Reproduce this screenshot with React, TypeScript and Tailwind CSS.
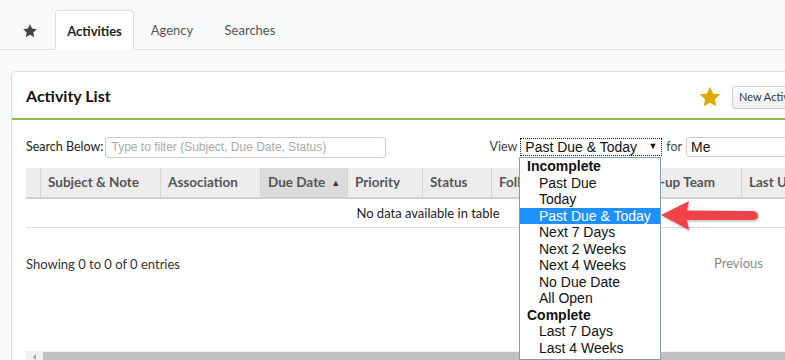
import React from "react";

const sans = { fontFamily: "Lato, 'Open Sans', sans-serif" };
const arial = { fontFamily: "'Liberation Sans', Arial, sans-serif" };

function Star({ className, color }: { className?: string; color: string }) {
  return (
    <svg viewBox="0 0 24 24" className={className}>
      <path
        d="M12 1.8l3.1 6.6 7.1.9-5.2 4.9 1.3 7.1L12 17.8l-6.3 3.5 1.3-7.1-5.2-4.9 7.1-.9z"
        fill={color}
      />
    </svg>
  );
}

const cols = [
  { w: 14, label: "" },
  { w: 120, label: "Subject & Note" },
  { w: 100, label: "Association" },
  { w: 87, label: "Due Date", sorted: true },
  { w: 75, label: "Priority" },
  { w: 69, label: "Status" },
  { w: 121, label: "Follow-up Date" },
  { w: 129, label: "Follow-up Team" },
  { w: 120, label: "Last Updated" },
];

const options: { t: string; group?: boolean; sel?: boolean }[] = [
  { t: "Incomplete", group: true },
  { t: "Past Due" },
  { t: "Today" },
  { t: "Past Due & Today", sel: true },
  { t: "Next 7 Days" },
  { t: "Next 2 Weeks" },
  { t: "Next 4 Weeks" },
  { t: "No Due Date" },
  { t: "All Open" },
  { t: "Complete", group: true },
  { t: "Last 7 Days" },
  { t: "Last 4 Weeks" },
];

export default function App() {
  return (
    <div
      className="relative w-[785px] h-[360px] overflow-hidden bg-[#f8f9fa] text-[#333]"
      style={sans}
    >
      {/* Tabs */}
      <div className="flex items-end h-[50px] border-b border-[#dddddd]">
        <div className="w-[55px] h-[40px] flex items-center justify-center pt-[3px]">
          <Star className="w-[16px] h-[16px] ml-[5px]" color="#444" />
        </div>
        <div className="w-[79px] h-[40px] -mb-px bg-white border border-[#dddddd] border-b-white rounded-t-[4px] flex items-center justify-center pt-[4px] text-[13px] font-bold text-[#222]">
          Activities
        </div>
        <div className="w-[76px] h-[40px] flex items-center justify-center pt-[4px] text-[13px] text-[#555]">
          Agency
        </div>
        <div className="w-[80px] h-[40px] flex items-center justify-center pt-[4px] text-[13px] text-[#555]">
          Searches
        </div>
      </div>

      {/* Panel */}
      <div className="ml-[11px] mt-[21px] w-[820px] bg-white border border-[#dddddd] rounded-tl-[4px]">
        <div className="h-[48px] flex items-center justify-between pl-[14px] pr-[22px] border-b-2 border-[#8cbb4a]">
          <div className="text-[16px] font-bold text-[#111] pt-[2px]">Activity List</div>
          <div className="flex items-center gap-[10px] pt-[4px]">
            <Star className="w-[24px] h-[24px]" color="#e0a800" />
            <div className="h-[23px] w-[76px] px-[6px] border border-[#cccccc] rounded-[3px] bg-gradient-to-b from-white to-[#eeeeee] text-[11px] text-[#333] flex items-center whitespace-nowrap">
              New Activity
            </div>
          </div>
        </div>

        <div className="pl-[14px]">
          {/* Search row */}
          <div className="h-[48px] flex items-center pt-[6px]">
            <span className="text-[12.5px] text-[#222]">Search Below:</span>
            <div
              className="ml-[2px] w-[281px] h-[21px] border border-[#cccccc] rounded-[3px] flex items-center px-[5px] text-[12px] text-[#aaaaaa]"
              style={arial}
            >
              Type to filter (Subject, Due Date, Status)
            </div>
            <span className="ml-[103px] text-[12.5px] text-[#444]">View</span>
            <div
              className="ml-[3px] w-[142px] h-[18px] border border-dotted border-[#222] flex items-center justify-between pl-[4px] pr-[4px] text-[14px] text-[#111]"
              style={arial}
            >
              <span>Past Due &amp; Today</span>
              <span className="text-[9px]">▼</span>
            </div>
            <span className="ml-[4px] text-[12.5px] text-[#444]">for</span>
            <div
              className="ml-[4px] w-[130px] h-[20px] border border-[#cccccc] rounded-[3px] flex items-center px-[4px] text-[14px] text-[#111]"
              style={arial}
            >
              Me
            </div>
          </div>

          {/* Table */}
          <div>
            <div className="flex h-[31px] bg-[#ededed] border-b-2 border-[#cfcfcf]">
              {cols.map((c, i) => (
                <div
                  key={i}
                  className={`shrink-0 flex items-center px-[7px] text-[13.5px] font-bold text-[#555] whitespace-nowrap overflow-hidden ${
                    i > 0 ? "border-l border-[#d4d4d4]" : ""
                  } ${c.sorted ? "bg-[#dcdcdc] text-[#222]" : ""}`}
                  style={{ width: c.w }}
                >
                  {c.label}
                  {c.sorted && <span className="ml-[6px] text-[9px] text-[#333]">▲</span>}
                </div>
              ))}
            </div>
            <div className="h-[29px] flex items-center border-b border-[#dddddd] pt-[1px]">
              <div className="w-[828px] text-center text-[13px] text-[#222]">
                No data available in table
              </div>
            </div>
          </div>

          {/* Footer */}
          <div className="h-[123px] flex items-start pt-[27px]">
            <span className="text-[13px] text-[#333]">Showing 0 to 0 of 0 entries</span>
            <span className="ml-[534px] -mt-[1px] text-[13px] text-[#888]">Previous</span>
          </div>

          {/* Scrollbar */}
          <div className="h-[10px] flex bg-[#f1f1f1] pt-[1px]">
            <div className="w-[17px] flex items-end justify-center">
              <div className="w-0 h-0 border-y-[3px] border-y-transparent border-r-[3px] border-r-[#a3a3a3] mb-[1px]"></div>
            </div>
            <div className="flex-1 bg-[#c1c1c1]"></div>
          </div>
        </div>
      </div>

      {/* Dropdown list */}
      <div
        className="absolute left-[519px] top-[157px] w-[142px] h-[203px] bg-white border border-[#7f9db9] text-[14px] text-[#111]"
        style={arial}
      >
        {options.map((o, i) => (
          <div
            key={i}
            className={`h-[16.55px] leading-[16.55px] whitespace-nowrap ${
              o.group ? "pl-[7px] font-bold" : "pl-[19px]"
            } ${o.sel ? "bg-[#1e90ff] text-white" : ""}`}
          >
            {o.t}
          </div>
        ))}
      </div>

      {/* Red arrow */}
      <svg
        className="absolute left-[656px] top-[198px] w-[108px] h-[40px]"
        viewBox="0 0 108 40"
      >
        <defs>
          <filter id="sh" x="-20%" y="-40%" width="140%" height="180%">
            <feDropShadow dx="1" dy="1.5" stdDeviation="1.2" floodColor="#000" floodOpacity="0.25" />
          </filter>
        </defs>
        <path
          d="M5 17 L33 3 L31 12.5 L97 13 Q102 13.5 102 17.5 Q102 21.5 97 22 L31 22 L33 32 Z"
          fill="#f04348"
          filter="url(#sh)"
        />
      </svg>
    </div>
  );
}
